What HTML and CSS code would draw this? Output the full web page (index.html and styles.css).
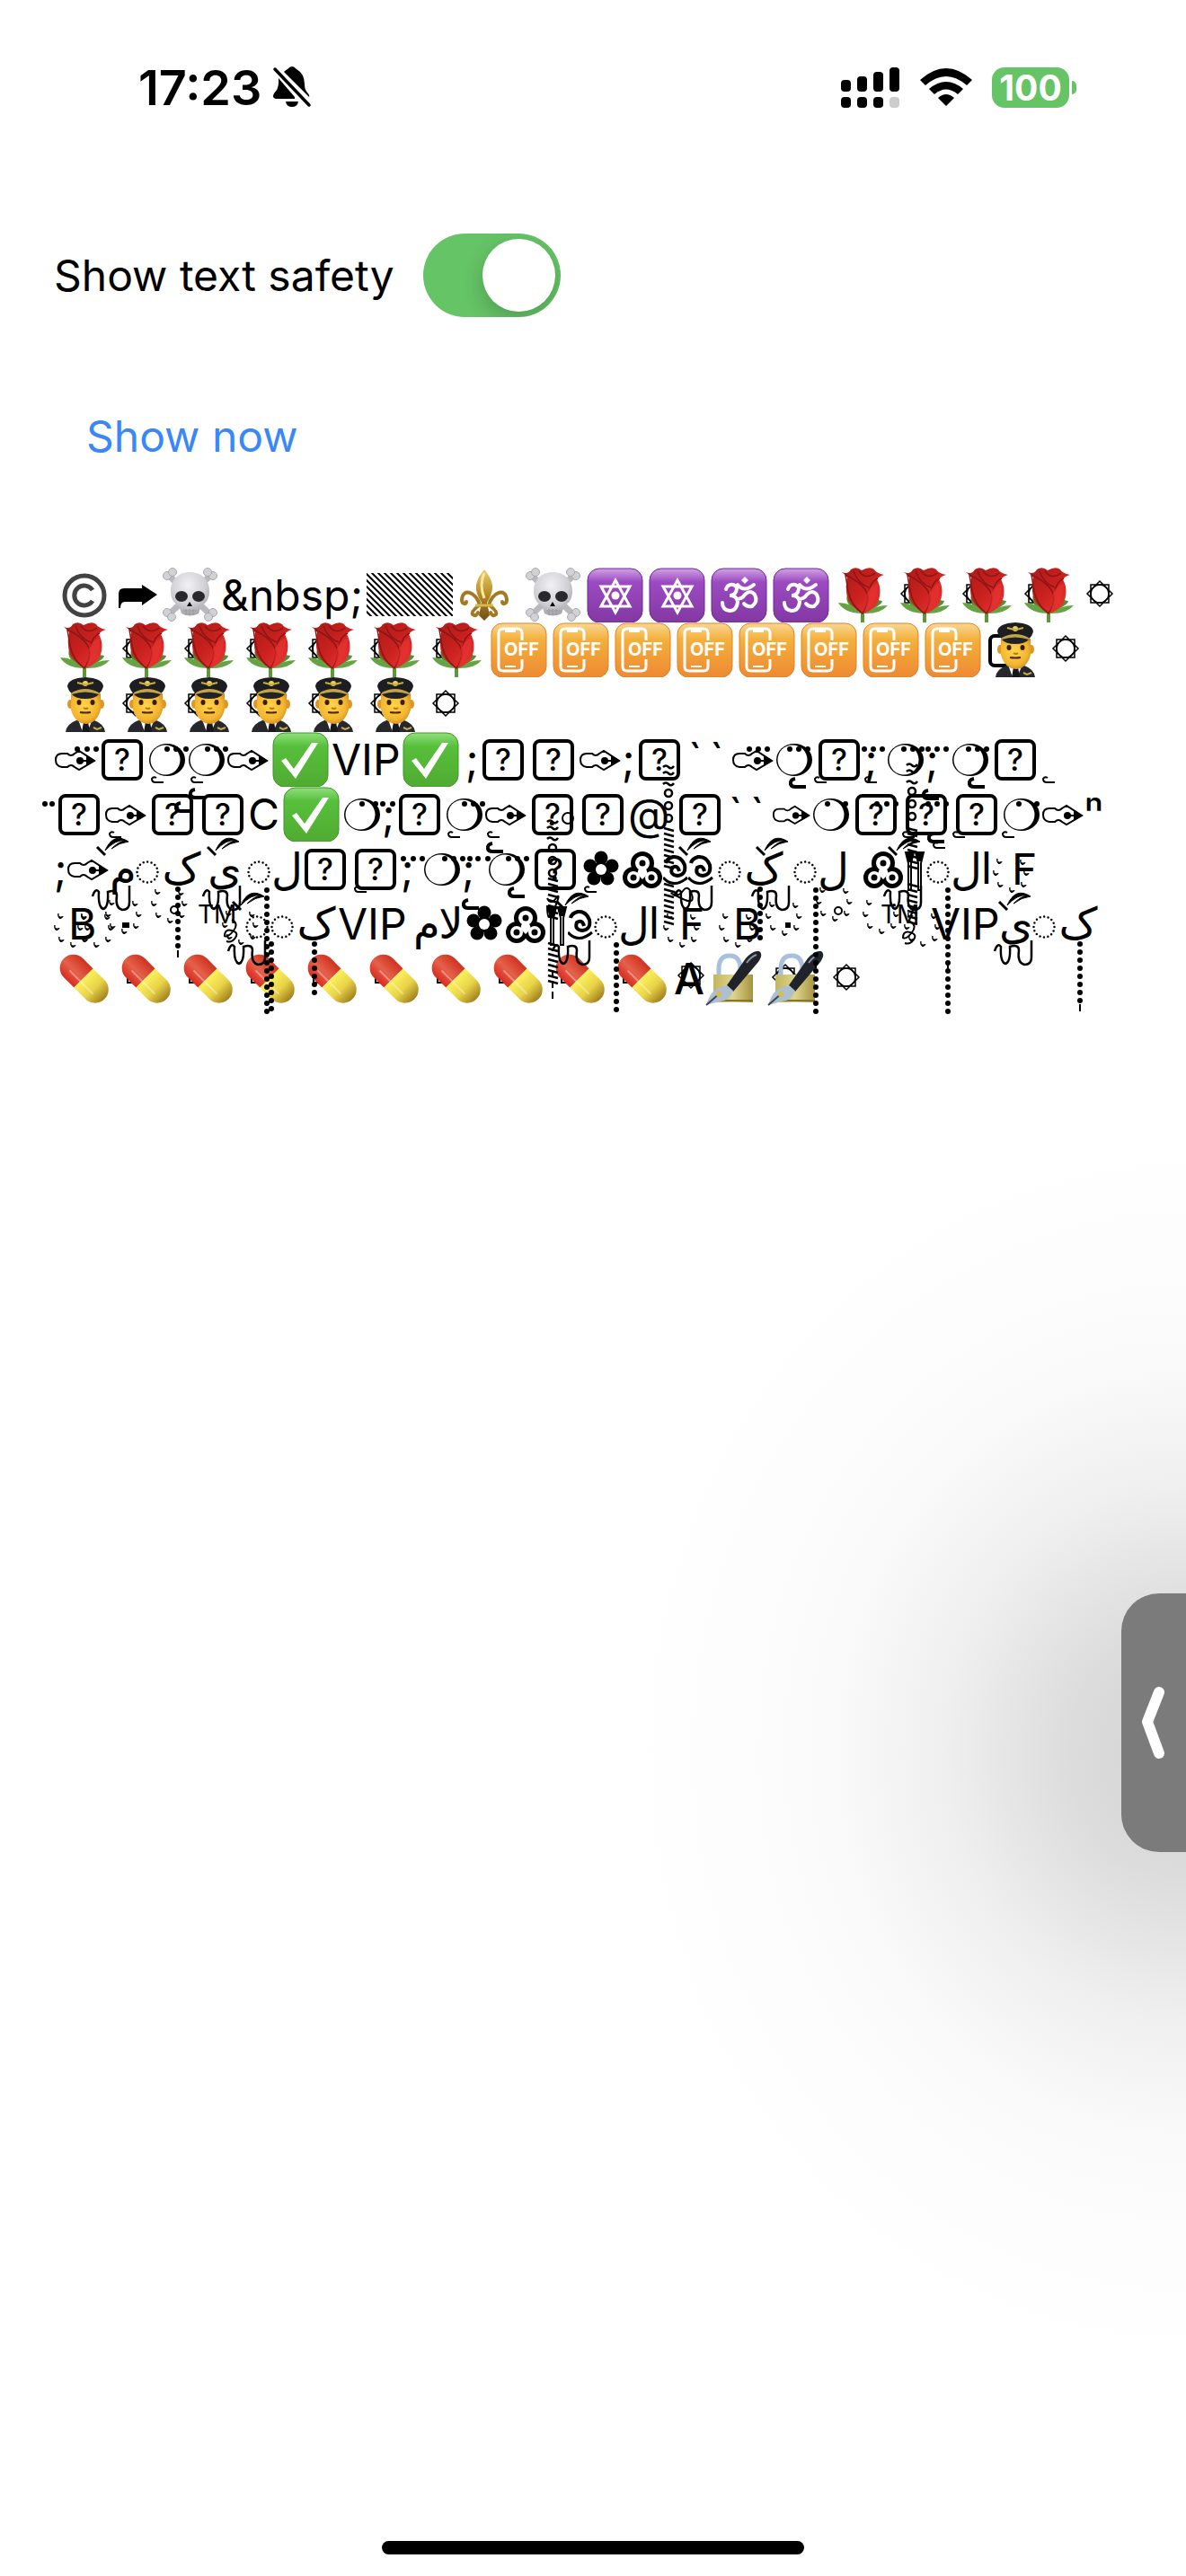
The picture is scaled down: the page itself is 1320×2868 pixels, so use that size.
FILE: index.html
```html
<!DOCTYPE html>
<html lang="en">
<head>
<meta charset="utf-8">
<meta name="viewport" content="width=device-width, initial-scale=1">
<title>Text safety</title>
<link rel="stylesheet" href="styles.css">
</head>
<body>
<svg class="defs" aria-hidden="true">
  <defs>
    <linearGradient id="gPurple" x1="0" y1="0" x2="0" y2="1"><stop offset="0" stop-color="#cfa3e2"/><stop offset=".25" stop-color="#9c4ac2"/><stop offset="1" stop-color="#8238a3"/></linearGradient>
    <linearGradient id="gOrange" x1="0" y1="0" x2="0" y2="1"><stop offset="0" stop-color="#f8d793"/><stop offset=".3" stop-color="#f3b03c"/><stop offset="1" stop-color="#ee8932"/></linearGradient>
    <linearGradient id="gGreen" x1="0" y1="0" x2="0" y2="1"><stop offset="0" stop-color="#8fe07c"/><stop offset=".25" stop-color="#57bf3b"/><stop offset="1" stop-color="#50ab32"/></linearGradient>
    <linearGradient id="gRose" x1="0" y1="0" x2="1" y2="1"><stop offset="0" stop-color="#a81b18"/><stop offset=".5" stop-color="#c9211e"/><stop offset="1" stop-color="#f23a3a"/></linearGradient>
    <linearGradient id="gGold" x1="0" y1="0" x2="0" y2="1"><stop offset="0" stop-color="#e9cf6a"/><stop offset=".5" stop-color="#b48a26"/><stop offset="1" stop-color="#6f4f14"/></linearGradient>
    <radialGradient id="gSkull" cx=".45" cy=".3" r=".75"><stop offset="0" stop-color="#f1f1f4"/><stop offset=".6" stop-color="#d0d0d4"/><stop offset="1" stop-color="#98989e"/></radialGradient>
    <radialGradient id="gFace" cx=".45" cy=".4" r=".65"><stop offset="0" stop-color="#ffd54b"/><stop offset=".7" stop-color="#f3b52f"/><stop offset="1" stop-color="#d18a1d"/></radialGradient>
    <linearGradient id="gRed" x1="0" y1="1" x2="0" y2="0"><stop offset="0" stop-color="#d92b1e"/><stop offset=".45" stop-color="#e4614b"/><stop offset="1" stop-color="#cf3220"/></linearGradient>
    <linearGradient id="gYellow" x1="0" y1="0" x2="1" y2="0"><stop offset="0" stop-color="#fbf15e"/><stop offset=".5" stop-color="#e9d347"/><stop offset="1" stop-color="#a1801f"/></linearGradient>
    <linearGradient id="gBrass" x1="0" y1="0" x2="1" y2="0"><stop offset="0" stop-color="#c3b65e"/><stop offset=".5" stop-color="#ded48c"/><stop offset="1" stop-color="#a3943f"/></linearGradient>
    <pattern id="hatch" width="7" height="7" patternUnits="userSpaceOnUse"><path d="M-1-1l9 9M-1 6l2 2M6-1l2 2" stroke="#000" stroke-width="2"/></pattern>

    <symbol id="copyright" viewBox="0 0 69 61"><circle cx="34" cy="31" r="22" fill="none" stroke="#424242" stroke-width="5"/><path d="M43 25a11 11 0 1 0 0 12" fill="none" stroke="#424242" stroke-width="5"/></symbol>
    <symbol id="arrow" viewBox="0 0 48 61"><path d="M3 45V29q0-6 6-6h20v-4l17 11-17 12v-4H10q-5 0-5 7z"/></symbol>
    <symbol id="skull" viewBox="0 0 69 61">
      <g stroke="#b9b9bd" stroke-width="7" stroke-linecap="round"><path d="M11 9l46 43M57 9L11 52"/></g>
      <g fill="#d2d2d6" stroke="#a8a8ad"><circle cx="9" cy="9" r="4.500"/><circle cx="15" cy="5" r="4.500"/><circle cx="60" cy="9" r="4.500"/><circle cx="54" cy="5" r="4.500"/><circle cx="9" cy="50" r="4.500"/><circle cx="14" cy="55" r="4.500"/><circle cx="60" cy="50" r="4.500"/><circle cx="55" cy="55" r="4.500"/></g>
      <path d="M34 5c14 0 22 9 22 21 0 9-4 14-9 16l-3 9q-10 5-19 0l-3-9c-5-2-9-7-9-16C13 14 21 5 34 5z" fill="url(#gSkull)"/>
      <ellipse cx="25" cy="32" rx="7" ry="6" fill="#29292b"/><ellipse cx="44" cy="32" rx="7" ry="6" fill="#29292b"/><path d="M34 38l3 5h-6z"/><path d="M27 48h15M30 46v6M34 46v7M38 46v6" stroke="#999" fill="none"/>
    </symbol>
    <symbol id="hatched" viewBox="0 0 96 61"><path d="M0 6h96v48H0z" fill="url(#hatch)"/></symbol>
    <symbol id="fleur" viewBox="0 0 69 61">
      <path d="M35 2c11 14 12 22 3 37l3 14-6 6-6-6 3-14C23 24 24 16 35 2z" fill="url(#gGold)"/>
      <path d="M30 42c-3-14-19-21-20-6 0 4 5 6 5 2M40 42c3-14 19-21 20-6 0 4-5 6-5 2M29 42q-9 7-7 10 4 3 6-2M41 42q9 7 7 10-4 3-6-2" fill="none" stroke="#a37a22" stroke-width="4" stroke-linecap="round"/><path d="M25 42h20" stroke="#d8b94d" stroke-width="3"/><path d="M35 6q-6 13 0 28" stroke="#f8e7a1" stroke-width="3" fill="none"/>
    </symbol>
    <symbol id="star" viewBox="0 0 44 61"><g fill="none" stroke="#000" stroke-width="1.500"><path d="M12 19h20v20H12zM22 15l14 14-14 14L8 29z"/><circle cx="22" cy="29" r="10"/></g></symbol>
    <symbol id="hexagram" viewBox="0 0 69 61"><rect x="4" y="1" width="61" height="60" rx="13" fill="url(#gPurple)" stroke="#6f2793"/><path d="M35 14l16 29H19zM35 50L19 21h32z" fill="none" stroke="#fff" stroke-width="3"/><circle cx="35" cy="31" r="4.500" fill="#fff"/></symbol>
    <symbol id="om" viewBox="0 0 69 61"><rect x="4" y="1" width="61" height="60" rx="13" fill="url(#gPurple)" stroke="#6f2793"/><path d="M20 24q2-6 8-5 6 2 3 8-2 4-7 4 8 0 9 7-1 10-9 10-8-1-8-9M32 35q6 0 9-5 6-6 11 0 4 8-3 13-6 1-9-3M33 19q7 9 18 0" fill="none" stroke="#fff" stroke-width="4" stroke-linecap="round"/><path d="M41 10l4 4-4 4-4-4z" fill="#fff"/></symbol>
    <symbol id="rose" viewBox="0 0 69 61">
      <path d="M34 48v13" stroke="#5a9a35" stroke-width="4"/>
      <path d="M17 30q-4 12 16 21 22-8 23-14z" fill="#4e9133"/><path d="M7 39q15 0 27 12Q14 51 7 39zM62 42q-14 0-28 9 20 1 28-9z" fill="#65a343"/>
      <path d="M11 5q7 3 10-3 6-4 12 1 9-5 14-1 2 4 11 6-5 1-8 5 7 13 0 28-7 8-16 10-11-6-16-15-4-13-1-25-2-3-6-6z" fill="url(#gRose)"/>
      <path d="M15 8q21 10 25 23 1 10-6 20-13-9-16-25zM24 4q5 14 17 18M41 27q2-12 10-15M30 4q8 10 18 2" fill="none" stroke="#8d1515" stroke-width="1.500"/><path d="M35 50q16-9 16-33-9 4-12 12 2 10-4 21z" fill="#e53331" opacity=".7"/>
    </symbol>
    <symbol id="roseStar" viewBox="0 0 69 61"><use href="#star" width="44" height="61"/><use href="#rose" width="69" height="61"/></symbol>
    <symbol id="off" viewBox="0 0 69 61"><rect x="4" y="1" width="61" height="60" rx="12" fill="url(#gOrange)" stroke="#df8324"/><path d="M38 20V12q0-5-5-5H17q-5 0-5 5v37q0 5 5 5h16q5 0 5-5v-8" fill="none" stroke="#fff" stroke-width="3"/><path d="M19 8h12v3H19z" fill="#fff"/><path d="M19 49h12" stroke="#fff" stroke-width="2"/><text x="18" y="37" class="off-text">OFF</text></symbol>
    <symbol id="pilot" viewBox="0 0 69 61">
      <path d="M13 61q1-9 12-13h20q11 4 12 13z" fill="#26282e"/><path d="M27 47h16l-6 14h-5z" fill="#fff"/><path d="M33 50h5l2 11h-9z" fill="#17181c"/>
      <ellipse cx="18" cy="30" rx="3" ry="5" fill="#dc9827"/><ellipse cx="53" cy="30" rx="3" ry="5" fill="#dc9827"/><path d="M19 18h33v18q-4 15-16 16-13-1-17-16z" fill="url(#gFace)"/>
      <ellipse cx="28" cy="28" rx="2.500" ry="3" fill="#3c1d0b"/><ellipse cx="43" cy="28" rx="2.500" ry="3" fill="#3c1d0b"/><path d="M29 39q6 1 12 0" stroke="#4d2908" stroke-width="2" fill="none"/><path d="M33 34q3 2 5 0" stroke="#bd761b" stroke-width="2" fill="none"/>
      <path d="M15 10q1-9 20-10 19 1 20 10-1 5-5 8-15-8-30 0-4-3-5-8z" fill="#1d1e21"/><path d="M20 17q15-8 30 0l-1 3q-14-6-28 0z" fill="#c2a54b"/><path d="M20 19q15-5 30 0-4 5-15 5t-15-5z" fill="#202226"/><circle cx="35" cy="7" r="3" fill="#e9d25c"/><path d="M26 6l8 2h2l8-2M44 56l4 2 5-2" stroke="#c8ad43" stroke-width="2" fill="none"/>
    </symbol>
    <symbol id="pilotStar" viewBox="0 0 69 61"><use href="#star" width="44" height="61"/><use href="#pilot" width="69" height="61"/></symbol>
    <symbol id="pilotBox" viewBox="0 0 69 61"><rect x="7" y="15" width="32" height="33" rx="5" fill="none" stroke="#000" stroke-width="4"/><use href="#pilot" width="69" height="61"/></symbol>
    <symbol id="pill" viewBox="0 0 69 61"><g transform="translate(33 30) rotate(45)"><path d="M0-15h-16a15 15 0 0 0 0 30H0z" fill="url(#gRed)"/><path d="M0-15h18a15 15 0 0 1 0 30H0z" fill="url(#gYellow)"/><path d="M-17 5H20" stroke="#fff" stroke-width="2" opacity=".35"/></g></symbol>
    <symbol id="pillBox" viewBox="0 0 69 61"><path d="M13 35v-8h8v8z" fill="none" stroke="#000" stroke-width="2"/><use href="#pill" width="69" height="61"/></symbol>
    <symbol id="lockPen" viewBox="0 0 69 61"><path d="M18 28V20q0-15 12-15t12 15v8" fill="none" stroke="#a8c0db" stroke-width="5"/><path d="M12 26h44v31H12z" fill="url(#gBrass)"/><path d="M12 55h44" stroke="#847532" stroke-width="2"/><path d="M27 38L48 8q8-9 15-8 5 3-1 12L34 45z" fill="#20242a"/><path d="M49 13q5-7 11-9" stroke="#8a96a5" stroke-width="2" fill="none"/><path d="M27 38l7 6q-5 12-15 12L4 60q5-17 16-20z" fill="#aebfd0"/><path d="M4 60l15-13" stroke="#3d4650" stroke-width="2"/><circle cx="18" cy="48" r="3" fill="#d7bf4a"/></symbol>
    <symbol id="lockPenStar" viewBox="0 0 69 61"><use href="#star" x="1" width="44" height="61"/><use href="#lockPen" width="69" height="61"/></symbol>
    <symbol id="check" viewBox="0 0 69 61"><rect x="4" y="1" width="61" height="60" rx="13" fill="url(#gGreen)" stroke="#41942a"/><path d="M13 32l5-3 9 12L47 12h7L29 52z" fill="#fff"/></symbol>
    <symbol id="pen" viewBox="0 0 48 61"><path d="M9 24h6q4 4 8 0l5-3 17 11-17 10-5-3q-4-4-8 0H9q-7-1-7-8t7-7z" fill="#fff" stroke="#000" stroke-width="2"/><path d="M36 26l10 6-10 6z"/><path d="M29 32h12" stroke="#000" stroke-width="2"/><circle cx="29" cy="32" r="4"/></symbol>
    <symbol id="moon" viewBox="0 0 44 61"><ellipse cx="22" cy="31" rx="20" ry="18"/><ellipse cx="20" cy="31" rx="16.500" ry="16.500" fill="#fff"/></symbol>
    <symbol id="dotted" viewBox="0 0 28 61"><circle cx="14" cy="34" r="11.500" fill="none" stroke="#000" stroke-width="2.500" stroke-linecap="round" stroke-dasharray="0 4.500"/></symbol>
    <symbol id="flower" viewBox="0 0 44 61"><circle cx="23" cy="18" r="7.500"/><circle cx="35" cy="27" r="7.500"/><circle cx="30" cy="41" r="7.500"/><circle cx="15" cy="41" r="7.500"/><circle cx="11" cy="27" r="7.500"/><circle cx="23" cy="31" r="9"/><circle cx="23" cy="31" r="6" fill="#fff"/></symbol>
    <symbol id="trefoil" viewBox="0 0 48 61"><circle cx="25" cy="24" r="13"/><circle cx="15" cy="40" r="12"/><circle cx="35" cy="40" r="12"/><g fill="#fff"><circle cx="25" cy="24" r="8"/><circle cx="15" cy="40" r="7"/><circle cx="35" cy="40" r="7"/><path d="M22 27h6l3 9-6 6-6-6z"/></g><circle cx="25" cy="24" r="3.500"/><circle cx="15" cy="40" r="3.500"/><circle cx="35" cy="40" r="3.500"/></symbol>
    <symbol id="spiral" viewBox="0 0 28 61"><path d="M18 33q-2-8-8-4-3 8 6 9 10-1 8-12-4-10-13-9-7 2-8 7" fill="none" stroke="#000" stroke-width="4"/><path d="M0 40q12 13 27 0" fill="none" stroke="#000" stroke-width="3"/></symbol>
    <symbol id="pillars" viewBox="0 0 24 61"><path d="M2 12h9l-3 12v30H5V24zM13 12h9l-3 12v30h-3V24z" fill="#fff" stroke="#000" stroke-width="2"/><path d="M2 12h9l-3 10H5zM13 12h9l-3 10h-3z"/></symbol>

    <symbol id="hamza" viewBox="0 0 16 8" overflow="visible"><path d="M6 2Q3 0 1 3q0 4 4 4h9" fill="none" stroke="#000" stroke-width="2"/></symbol>
    <symbol id="hook" viewBox="0 0 20 12" overflow="visible"><path d="M7 1Q1 2 2 7q1 3 5 3h12" fill="none" stroke="#000" stroke-width="4"/></symbol>
    <symbol id="leaf" viewBox="0 0 38 24" overflow="visible"><path d="M1 12l9 9" stroke="#000" stroke-width="3"/><path d="M10 16Q19-5 36 6q-10 1-19 8 8-8 15-9-10-2-22 11z" fill="#000" stroke="#000"/></symbol>
    <symbol id="wave" viewBox="0 0 44 24" overflow="visible"><path d="M1 8Q4-2 8 3q-1 17 5 19 6-2 5-19 10-3 10 4-2 14 6 16 8 0 8-8V-4" fill="none" stroke="#000" stroke-width="2.500"/></symbol>
    <symbol id="tick" viewBox="0 0 8 8" overflow="visible"><path d="M1 0q-1 6 6 4-4 5-6 0z" stroke="#000"/></symbol>
    <symbol id="ticks" viewBox="0 0 40 36" overflow="visible"><use href="#tick" x="4" y="2" width="7" height="7"/><use href="#tick" x="0" y="15" width="7" height="7"/><use href="#tick" x="5" y="28" width="7" height="7"/><use href="#tick" x="30" y="3" width="7" height="7"/><use href="#tick" x="34" y="15" width="7" height="7"/><use href="#tick" x="31" y="28" width="7" height="7"/><use href="#tick" x="18" y="34" width="7" height="7"/></symbol>
    <symbol id="stack" viewBox="0 0 14 100" overflow="visible"><g fill="none" stroke="#000" stroke-width="2.500"><path d="M1 2q3-3 6 0t6-1M1 9q3-3 6 0t6-1M1 21q3-3 6 0t6-1"/><circle cx="7" cy="31" r="4"/><circle cx="7" cy="45" r="4"/><circle cx="7" cy="59" r="4"/></g></symbol>
    <symbol id="slants" viewBox="0 0 14 48" overflow="visible"><path d="M0 2l11 3M0 8l11 3M0 14l11 3M0 20l11 3M0 26l11 3M0 32l11 3M0 38l11 3M0 44l11 3" stroke="#000" stroke-width="2.500"/></symbol>
  </defs>
</svg>

<header class="status">
  <div class="status-left">
    <time class="clock">17:23</time>
    <svg class="bell" viewBox="0 0 44 48" role="img" aria-label="Silent mode"><path d="M2 36q-2-1 0-5 5-5 5-12V14L25 35v2H4q-1 0-2-1zM13 7q2-2 4-3 5-6 10 0 9 5 9 17 0 6 3 9 3 3 2 5zM15 40h14q-1 6-7 6t-7-6z"/><path d="M3 4l38 40" stroke="#000" stroke-width="3.500" stroke-linecap="round"/></svg>
  </div>
  <div class="status-right">
    <svg class="signal" viewBox="0 0 66 45" role="img" aria-label="Signal"><rect y="14" width="11" height="13" rx="4"/><rect x="18" y="10" width="11" height="17" rx="4"/><rect x="36" y="5" width="11" height="22" rx="4"/><rect x="54" width="11" height="27" rx="4"/><rect y="33" width="11" height="12" rx="4"/><rect x="18" y="33" width="11" height="12" rx="4"/><rect x="36" y="33" width="11" height="12" rx="4"/><rect x="54" y="33" width="11" height="12" rx="4" fill="#ccc"/></svg>
    <svg class="wifi" viewBox="0 0 58 42" role="img" aria-label="Wi-Fi"><path d="M0 13q29-26 58 0l-6 6q-23-20-46 0zM10 23q19-16 38 0l-6 6q-13-11-26 0zM20 33q9-8 18 0l-9 9z"/></svg>
    <div class="battery"><span class="battery-level">100</span></div>
  </div>
</header>

<main class="page">
  <label class="setting"><span>Show text safety</span><input class="switch" type="checkbox" role="switch" checked></label>
  <button class="link-button" type="button">Show now</button>

  <section class="note" aria-label="Sample text">
    <div class="line">
      <svg class="emoji"><use href="#copyright"/></svg><svg class="w48"><use href="#arrow"/></svg><svg class="emoji"><use href="#skull"/></svg><span class="w162">&amp;nbsp;</span><svg class="w96"><use href="#hatched"/></svg><svg class="emoji"><use href="#fleur"/></svg><i class="g8"></i><svg class="emoji"><use href="#skull"/></svg><svg class="emoji"><use href="#hexagram"/></svg><svg class="emoji"><use href="#hexagram"/></svg><svg class="emoji"><use href="#om"/></svg><svg class="emoji"><use href="#om"/></svg><svg class="emoji"><use href="#rose"/></svg><svg class="emoji"><use href="#roseStar"/></svg><svg class="emoji"><use href="#roseStar"/></svg><svg class="emoji"><use href="#roseStar"/></svg><svg class="w44"><use href="#star"/></svg>
    </div>
    <div class="line">
      <svg class="emoji"><use href="#rose"/></svg><svg class="emoji"><use href="#roseStar"/></svg><svg class="emoji"><use href="#roseStar"/></svg><svg class="emoji"><use href="#roseStar"/></svg><svg class="emoji"><use href="#roseStar"/></svg><svg class="emoji"><use href="#roseStar"/></svg><svg class="emoji"><use href="#roseStar"/></svg><svg class="emoji"><use href="#off"/></svg><svg class="emoji"><use href="#off"/></svg><svg class="emoji"><use href="#off"/></svg><svg class="emoji"><use href="#off"/></svg><svg class="emoji"><use href="#off"/></svg><svg class="emoji"><use href="#off"/></svg><svg class="emoji"><use href="#off"/></svg><svg class="emoji"><use href="#off"/></svg><svg class="emoji"><use href="#pilotBox"/></svg><svg class="w44"><use href="#star"/></svg>
    </div>
    <div class="line">
      <svg class="emoji"><use href="#pilot"/></svg><svg class="emoji"><use href="#pilotStar"/></svg><svg class="emoji"><use href="#pilotStar"/></svg><svg class="emoji"><use href="#pilotStar"/></svg><svg class="emoji"><use href="#pilotStar"/></svg><svg class="emoji"><use href="#pilotStar"/></svg><svg class="w44"><use href="#star"/></svg>
    </div>
    <div class="line">
      <svg class="w48"><use href="#pen"/></svg><b class="box">?</b><svg class="w44"><use href="#moon"/></svg><svg class="w44"><use href="#moon"/></svg><svg class="w48"><use href="#pen"/></svg><svg class="emoji"><use href="#check"/></svg><span class="w76">VIP</span><svg class="emoji"><use href="#check"/></svg><i class="g4"></i><span class="w14">;</span><b class="box">?</b><b class="box">?</b><svg class="w48"><use href="#pen"/></svg><span class="w14">;</span><b class="box">?</b><i class="g4"></i><span class="w24">`</span><span class="w24">`</span><svg class="w48"><use href="#pen"/></svg><svg class="w44"><use href="#moon"/></svg><b class="box">?</b><span class="w24">;</span><svg class="w44"><use href="#moon"/></svg><span class="w28">;</span><svg class="w44"><use href="#moon"/></svg><b class="box">?</b>
    </div>
    <div class="line">
      <b class="box">?</b><svg class="w48"><use href="#pen"/></svg><b class="box">?</b><b class="box">?</b><span class="w36">C</span><svg class="emoji"><use href="#check"/></svg><svg class="w44"><use href="#moon"/></svg><span class="w14">;</span><b class="box">?</b><svg class="w44"><use href="#moon"/></svg><svg class="w48"><use href="#pen"/></svg><b class="box">?</b><b class="box">?</b><span class="w48">@</span><i class="g4"></i><b class="box">?</b><i class="g4"></i><span class="w24">`</span><span class="w24">`</span><svg class="w44"><use href="#pen"/></svg><svg class="w44"><use href="#moon"/></svg><b class="box">?</b><b class="box">?</b><b class="box">?</b><svg class="w44"><use href="#moon"/></svg><svg class="w48"><use href="#pen"/></svg><span>ⁿ</span>
    </div>
    <div class="line">
      <span class="w14">;</span><svg class="w48"><use href="#pen"/></svg><span class="w28 ar">م</span><svg class="w28"><use href="#dotted"/></svg><span class="w48 ar">ک</span><span class="w48 ar">ی</span><svg class="w28"><use href="#dotted"/></svg><span class="w28 ar">ل</span><i class="g4"></i><b class="box">?</b><b class="box">?</b><span class="w24">;</span><svg class="w44"><use href="#moon"/></svg><span class="w28">;</span><svg class="w44"><use href="#moon"/></svg><i class="g4"></i><b class="box">?</b><svg class="w44"><use href="#flower"/></svg><svg class="w48"><use href="#trefoil"/></svg><svg class="w28"><use href="#spiral"/></svg><svg class="w28"><use href="#spiral"/></svg><i class="g4"></i><svg class="w28"><use href="#dotted"/></svg><span class="w48 ar">ک</span><i class="g8"></i><svg class="w28"><use href="#dotted"/></svg><span class="w28 ar">ل</span><i class="g16"></i><i class="g4"></i><svg class="w48"><use href="#trefoil"/></svg><svg class="w24"><use href="#pillars"/></svg><svg class="w28"><use href="#dotted"/></svg><span class="w28 ar">ل</span><span class="w24 ar">ا</span><i class="g16"></i><span class="w36">F</span>
    </div>
    <div class="line">
      <i class="g16"></i><span class="w36">B</span><i class="g108"></i><span class="w48 tm">TM</span><i class="g4"></i><svg class="w28"><use href="#dotted"/></svg><svg class="w28"><use href="#dotted"/></svg><span class="w48 ar">ک</span><span class="w76">VIP</span><i class="g8"></i><span class="w28 ar">م</span><span class="w28 ar">لا</span><svg class="w44"><use href="#flower"/></svg><svg class="w48"><use href="#trefoil"/></svg><svg class="w24"><use href="#pillars"/></svg><svg class="w28"><use href="#spiral"/></svg><svg class="w28"><use href="#dotted"/></svg><span class="w28 ar">ل</span><span class="w24 ar">ا</span><i class="g16"></i><span class="w36">F</span><i class="g16"></i><i class="g8"></i><span class="w36">B</span><i class="g108"></i><i class="g16"></i><i class="g4"></i><span class="w48 tm">TM</span><i class="g8"></i><span class="w76">VIP</span><span class="w36 ar">ی</span><svg class="w28"><use href="#dotted"/></svg><span class="w48 ar">ک</span>
    </div>
    <div class="line">
      <svg class="emoji"><use href="#pill"/></svg><svg class="emoji"><use href="#pillBox"/></svg><svg class="emoji"><use href="#pillBox"/></svg><svg class="emoji"><use href="#pillBox"/></svg><svg class="emoji"><use href="#pillBox"/></svg><svg class="emoji"><use href="#pillBox"/></svg><svg class="emoji"><use href="#pillBox"/></svg><svg class="emoji"><use href="#pillBox"/></svg><svg class="emoji"><use href="#pillBox"/></svg><svg class="emoji"><use href="#pillBox"/></svg><span class="w28 strong">A</span><i class="g4"></i><svg class="emoji"><use href="#lockPen"/></svg><svg class="emoji"><use href="#lockPenStar"/></svg><svg class="w44"><use href="#star"/></svg>
    </div>

    <!-- combining marks that stack over the neighbouring lines -->
    <svg class="marks" viewBox="0 632 1320 512" aria-hidden="true">
      <g fill="none" stroke="#000" stroke-width="6" stroke-linecap="round">
        <path d="M86 834h0M97 834h0M107 834h0M186 834h0M196 834h0M207 834h0M231 834h0M241 834h0M251 834h0M834 834h0M844 834h0M854 834h0M879 834h0M889 834h0M899 834h0M962 834h0M972 834h0M982 834h0M1006 834h0M1016 834h0M1026 834h0M1033 834h0M1043 834h0M1053 834h0M1078 834h0M1088 834h0M1098 834h0"/>
        <path d="M50 895h0M58 895h0M403 895h0M418 895h0M426 895h0M437 895h0M517 895h0M527 895h0M537 895h0M921 895h0M941 895h0M976 895h0M987 895h0M997 895h0M1033 895h0M1043 895h0M1053 895h0M1134 895h0M1154 895h0"/>
        <path d="M449 956h0M460 956h0M470 956h0M495 956h0M505 956h0M515 956h0M523 956h0M532 956h0M543 956h0M566 956h0M576 956h0M586 956h0"/>
        <path stroke-dasharray="0 9" d="M198 990v65M297 991v139M302 1051v75M350 1051v56M686 1052v79M846 990v56M908 991v139M1055 991v139M1202 1051v64"/>
      </g>
      <g>
        <use href="#hamza" x="168" y="864" width="16" height="8"/><use href="#hamza" x="212" y="864" width="16" height="8"/><use href="#hamza" x="906" y="864" width="16" height="8"/><use href="#hamza" x="962" y="864" width="16" height="8"/><use href="#hamza" x="1160" y="864" width="16" height="8"/><use href="#hamza" x="121" y="925" width="16" height="8"/><use href="#hamza" x="498" y="925" width="16" height="8"/><use href="#hamza" x="542" y="925" width="16" height="8"/><use href="#hamza" x="1004" y="925" width="16" height="8"/><use href="#hamza" x="1060" y="925" width="16" height="8"/><use href="#hamza" x="1115" y="925" width="16" height="8"/><use href="#hamza" x="1038" y="937" width="16" height="8"/><use href="#hamza" x="394" y="986" width="16" height="8"/><use href="#hamza" x="650" y="986" width="16" height="8"/>
        <use href="#hook" x="541" y="938" width="20" height="12"/><use href="#hook" x="878" y="866" width="20" height="12"/><use href="#hook" x="1077" y="866" width="20" height="12"/><use href="#hook" x="565" y="988" width="20" height="12"/><use href="#hook" x="514" y="1001" width="20" height="12"/><use href="#hook" x="1032" y="927" width="20" height="12"/><use href="#hook" x="210" y="878" width="20" height="12"/><use href="#hook" x="194" y="893" width="20" height="12"/><use href="#hook" x="1026" y="879" width="20" height="12"/>
        <use href="#leaf" x="107" y="931" width="38" height="24"/><use href="#leaf" x="230" y="931" width="38" height="24"/><use href="#leaf" x="258" y="992" width="38" height="24"/><use href="#leaf" x="755" y="931" width="38" height="24"/><use href="#leaf" x="619" y="992" width="38" height="24"/><use href="#leaf" x="841" y="931" width="38" height="24"/><use href="#leaf" x="988" y="931" width="38" height="24"/><use href="#leaf" x="1111" y="992" width="38" height="24"/>
        <use href="#wave" x="102" y="990" width="44" height="24"/><use href="#wave" x="225" y="990" width="44" height="24"/><use href="#wave" x="253" y="1051" width="44" height="24"/><use href="#wave" x="750" y="990" width="44" height="24"/><use href="#wave" x="836" y="990" width="44" height="24"/><use href="#wave" x="983" y="990" width="44" height="24"/><use href="#wave" x="1106" y="1051" width="44" height="24"/><use href="#wave" x="614" y="1051" width="44" height="24"/>
        <use href="#ticks" x="60" y="1015" width="40" height="36"/><use href="#ticks" x="86" y="1015" width="40" height="36"/><use href="#ticks" x="117" y="1000" width="40" height="36"/><use href="#ticks" x="168" y="988" width="40" height="36"/><use href="#ticks" x="247" y="1012" width="40" height="36"/>
        <use href="#ticks" x="738" y="1015" width="40" height="36"/><use href="#ticks" x="800" y="1015" width="40" height="36"/><use href="#ticks" x="852" y="1002" width="40" height="36"/><use href="#ticks" x="908" y="986" width="40" height="36"/><use href="#ticks" x="960" y="1000" width="40" height="36"/><use href="#ticks" x="1006" y="1014" width="40" height="36"/><use href="#ticks" x="1105" y="954" width="40" height="36"/>
        <use href="#stack" x="737" y="852" width="14" height="100"/><use href="#stack" x="608" y="913" width="14" height="100"/><use href="#stack" x="1008" y="850" width="14" height="100"/>
        <use href="#slants" x="739" y="920" width="14" height="48"/><use href="#slants" x="739" y="982" width="14" height="48"/><use href="#slants" x="610" y="976" width="14" height="48"/><use href="#slants" x="610" y="1048" width="14" height="48"/><use href="#slants" x="1010" y="920" width="14" height="48"/><use href="#slants" x="1010" y="982" width="14" height="48"/>
        <use href="#star" x="747" y="1057" width="44" height="61"/>
      </g>
      <g fill="none" stroke="#000" stroke-width="2">
        <path d="M615 1080v32M198 1058v10M908 1070v8M1055 1070v8M1202 1118v9" stroke-dasharray="8 4"/>
        <circle cx="194" cy="1013" r="4"/><circle cx="933" cy="1014" r="4"/><circle cx="632" cy="911" r="6"/>
        <path d="M258 1024q8 4 2 12t-10 6q0-8 8-6t4 8-10 4M1013 1026q8 4 2 12t-10 6q0-8 8-6t4 8-10 4M750 992q4 8 10 0t10 4 -12 4-8-4M609 1000q4 8 10 0t-2 12-8-4"/>
        <path d="M137 1028h6v4h-6zM875 1028h4v4h-4z" fill="#000"/>
      </g>
    </svg>
  </section>
</main>

<button class="drawer-tab" type="button" aria-label="Open panel"><svg viewBox="0 0 28 84"><path d="M20 8L7 41l13 35" fill="none" stroke="#fff" stroke-width="12" stroke-linecap="round" stroke-linejoin="round"/></svg></button>
<div class="home-bar"></div>
</body>
</html>
```
FILE: styles.css
```css
* { box-sizing: border-box; }

body {
  position: relative;
  display: flex;
  flex-direction: column;
  min-height: 100vh;
  margin: 0;
  overflow-x: hidden;
  font: 48px/61px Inter, "Noto Sans", sans-serif;
  color: #000;
  background: radial-gradient(ellipse 640px 700px at 100% 68%, #d2d2d2 0%, #dcdcdc 20%, #efefef 42%, #fafafa 62%, #fdfdfd 80%, #fff 100%) #fff;
}

button {
  padding: 0;
  border: 0;
  background: none;
  font: inherit;
}

.defs { position: absolute; width: 0; height: 0; }

/* Status bar */
.status {
  display: flex;
  justify-content: space-between;
  align-items: center;
  height: 194px;
  padding: 0 130px 0 154px;
}
.status-left, .status-right { display: flex; align-items: center; }
.status-left { gap: 12px; }
.status-right { gap: 22px; }
.clock { font-size: 54px; font-weight: 600; }
.bell { width: 44px; height: 48px; }
.signal { width: 66px; height: 45px; }
.wifi { width: 58px; height: 42px; }
.battery {
  position: relative;
  width: 86px;
  height: 45px;
  border-radius: 14px;
  background: #65c466;
  color: #fff;
  font-size: 39px;
  font-weight: 700;
  line-height: 45px;
  text-align: center;
}
.battery::after {
  content: "";
  position: absolute;
  top: 15px;
  right: -8px;
  width: 5px;
  height: 15px;
  border-radius: 0 6px 6px 0;
  background: #65c466;
}

/* Controls */
.page { display: flex; flex-direction: column; align-items: flex-start; flex: 1; padding: 66px 0 0 60px; }
.setting { display: flex; align-items: center; gap: 32px; }
.switch {
  appearance: none;
  display: flex;
  justify-content: flex-end;
  width: 153px;
  height: 93px;
  margin: 0;
  padding: 6px;
  border-radius: 47px;
  background: #65c466;
  overflow: hidden;
}
.switch::before {
  content: "";
  width: 81px;
  height: 81px;
  border-radius: 50%;
  background: #fff;
  box-shadow: 0 9px 24px rgba(0, 0, 0, 0.2);
}
.link-button { margin: 102px 0 0 36px; color: #3a87f7; }

/* Text sample: every line is a row of glyph cells */
.note { position: relative; align-self: stretch; margin-top: 116px; }
.line { display: flex; height: 61px; white-space: nowrap; }
.line > * { flex: none; height: 61px; }
.line > svg { display: block; }
.emoji { width: 69px; }
.w14 { width: 14px; }
.w24 { width: 24px; }
.w28 { width: 28px; }
.w36 { width: 36px; }
.w44 { width: 44px; }
.w48 { width: 48px; }
.w76 { width: 76px; }
.w96 { width: 96px; }
.w162 { width: 162px; }
.g4 { width: 4px; }
.g8 { width: 8px; }
.g16 { width: 16px; }
.g108 { width: 108px; }
.line > .box {
  width: 46px;
  height: 46px;
  margin: 8px 5px;
  border: 4px solid #000;
  border-radius: 8px;
  font-size: 34px;
  font-weight: 500;
  line-height: 38px;
  text-align: center;
}
.ar { font-family: "DejaVu Sans", sans-serif; text-align: center; }
.tm { font-size: 28px; line-height: 40px; }
.strong { font-weight: 500; }
.off-text { font: 700 20px Inter, sans-serif; fill: #fff; }
.marks { position: absolute; top: 0; left: -60px; width: 1320px; height: 512px; overflow: visible; pointer-events: none; }

.drawer-tab {
  position: absolute;
  right: 0;
  bottom: 806px;
  display: flex;
  align-items: center;
  justify-content: center;
  width: 72px;
  height: 288px;
  border-radius: 42px 0 0 42px;
  background: #7b7b7b;
}
.drawer-tab svg { width: 28px; height: 84px; }

.home-bar {
  align-self: center;
  width: 470px;
  height: 15px;
  margin-bottom: 24px;
  border-radius: 8px;
  background: #000;
}
```
